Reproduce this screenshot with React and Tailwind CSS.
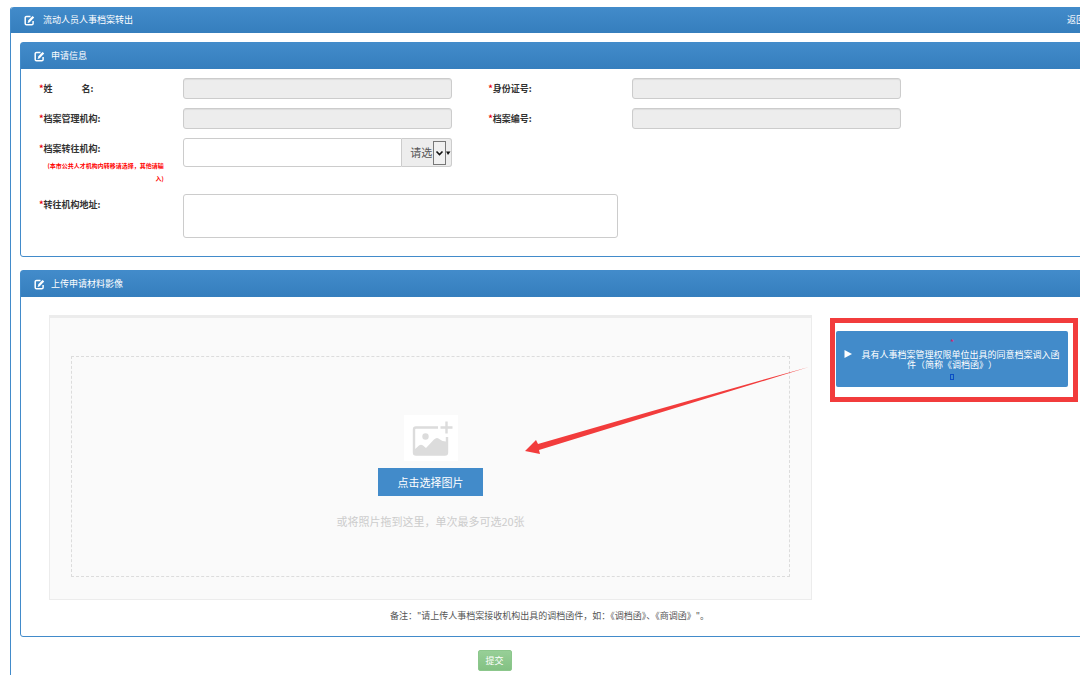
import { useState } from 'react';

const EditIcon = () => (
  <svg viewBox="0 0 11 11" className="w-[11px] h-[11px] flex-shrink-0" fill="none" stroke="currentColor" aria-hidden="true">
    <path d="M6.500 1.500H2.500a1.300 1.300 0 0 0-1.300 1.300V8.500a1.300 1.300 0 0 0 1.300 1.300H7.800a1.300 1.300 0 0 0 1.300-1.300V6" strokeWidth="1.500" />
    <path d="M4 7.200L4.300 5.300L8.600 1L10.200 2.600L5.900 6.900z" fill="currentColor" stroke="none" />
    <path d="M3.700 7.500l1.800-.3" strokeWidth="0.800" />
  </svg>
);

const PictureIcon = () => (
  <svg viewBox="0 0 54 46" className="w-[54px] h-[46px] bg-white" aria-hidden="true">
    <path d="M34 12.500H12a2 2 0 0 0-2 2V37.500a2 2 0 0 0 2 2H41a2 2 0 0 0 2-2V22" fill="none" stroke="#dcdcdc" strokeWidth="2.400" />
    <circle cx="21.500" cy="21.500" r="3.200" fill="#dcdcdc" />
    <path d="M10 35l5-4.500q2-1.500 4 0l3 2.500 8-8.500q3-3 6 0q2 2 6 2v11a2 2 0 0 1-2 2H12a2 2 0 0 1-2-2z" fill="#dcdcdc" />
    <path d="M36.500 12.500H48.500M42.500 6.500V18.500" fill="none" stroke="#dcdcdc" strokeWidth="2.400" />
  </svg>
);

const PanelHeader = ({ title, className = '', children }) => (
  <div className={`flex items-center h-[26px] bg-gradient-to-b from-[#428bca] to-[#357ebd] text-white ${className}`}>
    <EditIcon />
    <h2>{title}</h2>
    {children}
  </div>
);

const FieldLabel = ({ htmlFor, children, className = '' }) => (
  <label htmlFor={htmlFor} className={`block font-bold leading-[21px] whitespace-pre ${className}`}>
    <span className="text-red-600">*</span>
    {children}
  </label>
);

const inputClass = 'w-full h-[21px] rounded-[3px] border border-[#ccc] px-2 shadow-[inset_0_1px_1px_rgba(0,0,0,0.07)] disabled:bg-[#ededed]';

const App = () => {
  const [org, setOrg] = useState('');
  const [address, setAddress] = useState('');

  return (
    <div className="min-h-screen flex flex-col overflow-hidden bg-white pt-[7px] text-[9px] text-[#333] font-['Noto_Sans_CJK_SC',sans-serif]">
      <main className="flex-1 ml-[10px] -mr-6 border-l border-[#428bca] rounded-tl-[3px]">
        <PanelHeader title="流动人员人事档案转出" className="pl-[13px] pr-[19px] gap-2 rounded-tl-[3px]">
          <a href="#back" className="ml-auto">返回</a>
        </PanelHeader>

        <div className="px-[9px] pt-[9px] pb-1">
          {/* Application details */}
          <section className="border border-[#428bca] rounded-[3px]">
            <PanelHeader title="申请信息" className="pl-[13px] gap-[6px]" />
            <form className="grid grid-cols-[8fr_15fr_2fr_8fr_15fr_10fr] gap-y-[9px] pl-[18px] pr-[13px] pt-[9px] pb-[18px]">
              <FieldLabel htmlFor="name">{'姓\u3000\u3000\u3000 名:'}</FieldLabel>
              <input id="name" className={inputClass} disabled />
              <FieldLabel htmlFor="idcard" className="col-start-4">身份证号:</FieldLabel>
              <input id="idcard" className={inputClass} disabled />

              <FieldLabel htmlFor="manager" className="col-start-1">档案管理机构:</FieldLabel>
              <input id="manager" className={inputClass} disabled />
              <FieldLabel htmlFor="fileno" className="col-start-4">档案编号:</FieldLabel>
              <input id="fileno" className={inputClass} disabled />

              <div className="col-start-1 pr-[19px]">
                <FieldLabel htmlFor="org">档案转往机构:</FieldLabel>
                <p className="text-[6px] leading-[13px] font-bold text-right text-[#f00]">
                  (本市公共人才机构内转移请选择，其他请输
                  <br />
                  入)
                </p>
              </div>
              <div className="flex h-[29px]">
                <input
                  id="org"
                  value={org}
                  onChange={(e) => setOrg(e.target.value)}
                  className="flex-1 min-w-0 h-full px-2 border border-[#ccc] rounded-l-[3px]"
                />
                <div className="relative w-[50px] border border-l-0 border-[#ccc] rounded-r-[3px] bg-[#ededed]">
                  <select aria-label="选择机构" className="w-full h-full appearance-none bg-transparent pl-2 pr-4 text-[11px] text-[#555]">
                    <option>请选</option>
                  </select>
                  <svg viewBox="0 0 18 24" className="absolute right-0 top-[2px] w-[18px] h-6 pointer-events-none" aria-hidden="true">
                    <rect x="0.500" y="0.500" width="12" height="23" fill="#f0f0f0" stroke="#777" />
                    <path d="M3.500 10.500l3 3 3-3" fill="none" stroke="#111" strokeWidth="1.600" />
                    <path d="M13 10.500h4.500l-2.500 3.500z" fill="#111" />
                  </svg>
                </div>
              </div>

              <FieldLabel htmlFor="address" className="col-start-1">转往机构地址:</FieldLabel>
              <textarea
                id="address"
                value={address}
                onChange={(e) => setAddress(e.target.value)}
                className="col-span-3 w-[97%] h-11 px-2 py-1 border border-[#ccc] rounded-[3px] resize-none"
              />
            </form>
          </section>

          {/* Upload area */}
          <section className="mt-[13px] border border-[#428bca] rounded-[3px]">
            <PanelHeader title="上传申请材料影像" className="pl-[13px] gap-[6px]" />
            <div className="flex items-start gap-[18px] pl-7 pr-4 pt-[18px]">
              <div className="relative flex-1 border border-t-[3px] border-[#ececec] bg-[#fafafa] px-[21px] pt-[38px] pb-[22px]">
                <div className="flex flex-col items-center h-[221px] pt-[58px] border border-dashed border-[#dcdcdc]">
                  <PictureIcon />
                  <button type="button" className="mt-[7px] w-[105px] h-7 bg-[#428bca] text-white text-[11px]">
                    点击选择图片
                  </button>
                  <p className="mt-4 text-[11px] leading-[18px] text-[#ccc]">或将照片拖到这里，单次最多可选20张</p>
                </div>
                <svg viewBox="0 0 286 92" className="absolute right-0 top-[47px] w-[286px] h-[92px] pointer-events-none" aria-hidden="true">
                  <path d="M284 2Q150 39 13 79L11 75L0 86L15 89L14 85Q150 43 284 2z" fill="#f23c3c" />
                </svg>
              </div>

              <aside className="w-[248px] mt-[3px] border-[5px] border-[#f23c3c] pl-px pr-[5px] pt-2 pb-[10px]">
                <button
                  type="button"
                  className="block w-full h-14 px-2 rounded-[2px] bg-[#428bca] text-white text-center leading-[10px] [text-spacing-trim:space-all]"
                >
                  <span className="block mb-[2px] text-[#d6246e]">*</span>
                  <svg viewBox="0 0 8 8" className="inline-block align-baseline w-2 h-2 mr-[9px]" fill="currentColor" aria-hidden="true">
                    <path d="M0.500 0L8 4L0.500 8z" />
                  </svg>
                  具有人事档案管理权限单位出具的同意档案调入函件（简称《调档函》）
                  <span className="block w-1 h-[6px] mx-auto mt-1 border border-[#0a4fc4]" />
                </button>
              </aside>
            </div>
            <p className="mt-2 mb-[13px] pr-4 text-center leading-[15px] text-[#555]">
              备注："请上传人事档案接收机构出具的调档函件，如：《调档函》、《商调函》"。
            </p>
          </section>

          <div className="flex justify-center mt-[13px] pr-[126px]">
            <button type="submit" className="w-[34px] h-[21px] rounded-[2px] border border-[#8cc78c] bg-gradient-to-b from-[#97cf97] to-[#83c183] text-white">
              提交
            </button>
          </div>
        </div>
      </main>
    </div>
  );
};

export default App;
